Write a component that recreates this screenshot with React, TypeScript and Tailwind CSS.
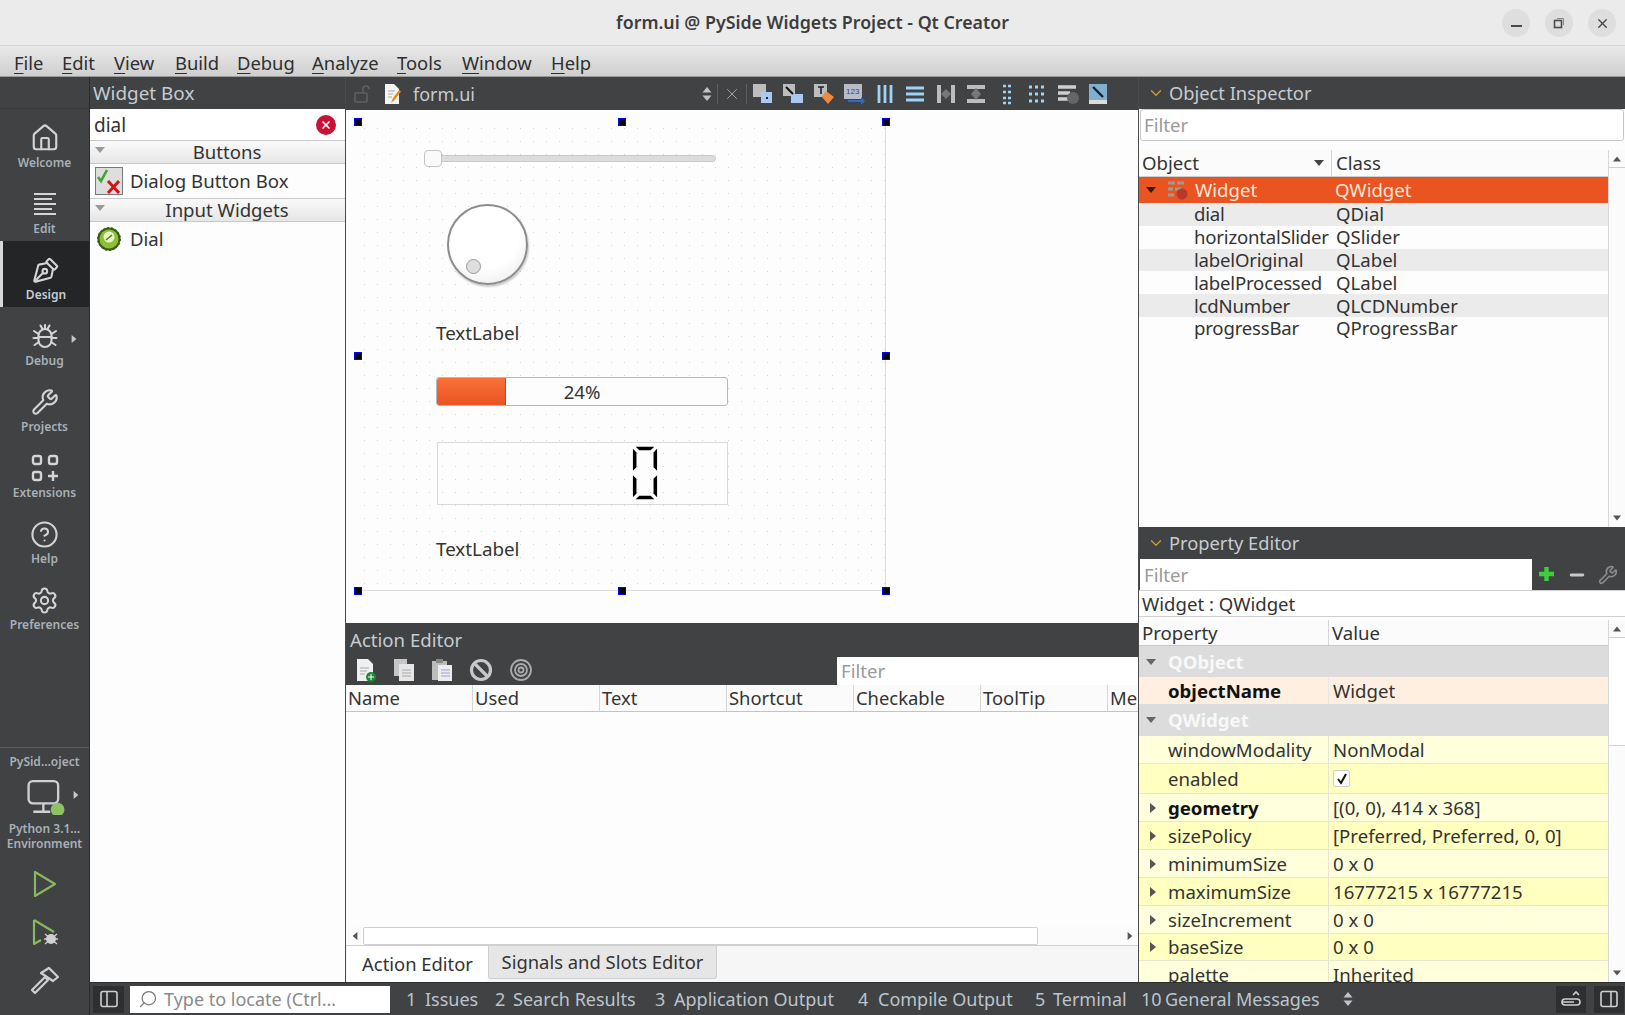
import React from "react";
import { Home, PenTool, Wrench, CircleHelp, Settings, Search, X, Minus, ChevronDown } from "lucide-react";

const Tri = ({ dir = "down", c = "#555", s = 5 }: { dir?: "down" | "right" | "up" | "left"; c?: string; s?: number }) => {
  const pts = { down: "0,2 10,2 5,8", up: "0,8 10,8 5,2", right: "2,0 8,5 2,10", left: "8,0 2,5 8,10" }[dir];
  return (
    <svg width={s * 2} height={s * 2} viewBox="0 0 10 10" className="shrink-0">
      <polygon points={pts} fill={c} />
    </svg>
  );
};

const Updown = ({ c = "#c8ccd0" }: { c?: string }) => (
  <svg width="10" height="16" viewBox="0 0 10 16" className="shrink-0">
    <polygon points="5,1 9.5,6.5 0.5,6.5" fill={c} />
    <polygon points="5,15 9.5,9.5 0.5,9.5" fill={c} />
  </svg>
);

const menus = [
  ["F", "ile", 30],
  ["E", "dit", 34],
  ["V", "iew", 43],
  ["B", "uild", 44],
  ["D", "ebug", 57],
  ["A", "nalyze", 67],
  ["T", "ools", 47],
  ["W", "indow", 71],
  ["H", "elp", 40],
] as const;

function TitleBar() {
  return (
    <div className="h-[46px] shrink-0 bg-[#ebebeb] border-b border-[#d2d2d2] flex items-center relative">
      <div className="flex-1 text-center text-[17.8px] font-semibold text-[#3d3d3d]">form.ui @ PySide Widgets Project - Qt Creator</div>
      <div className="absolute right-[9px] top-[9px] flex gap-[15px]">
        <div className="w-[28px] h-[28px] rounded-full bg-[#dedede] flex items-center justify-center">
          <div className="w-[11px] h-[2px] bg-[#4a4a4a] mt-[6px]" />
        </div>
        <div className="w-[28px] h-[28px] rounded-full bg-[#dedede] flex items-center justify-center">
          <svg width="14" height="14" viewBox="0 0 14 14" fill="none" stroke="#4a4a4a">
            <rect x="2.5" y="4.5" width="7" height="7" strokeWidth="1.6" />
            <path d="M5 2.5h6.5V9" strokeWidth="1" stroke="#888" />
          </svg>
        </div>
        <div className="w-[28px] h-[28px] rounded-full bg-[#dedede] flex items-center justify-center">
          <X size={15} strokeWidth={2.2} color="#444" />
        </div>
      </div>
    </div>
  );
}

function MenuBar() {
  return (
    <div className="h-[31px] shrink-0 bg-gradient-to-b from-[#e9e9e9] to-[#cfcfcf] border-b border-[#9a9a9a] flex items-center pl-[14px] pt-[4px] gap-[18px] text-[18.4px] text-[#2f2f2f]">
      {menus.map(([a, b, w]) => (
        <div key={a} className="leading-none whitespace-nowrap" style={{ width: w }}>
          <span className="underline underline-offset-[3px]">{a}</span>
          {b}
        </div>
      ))}
    </div>
  );
}

const EditIcon = () => (
  <svg width="26" height="26" viewBox="0 0 26 26" stroke="#d4d4d4" strokeWidth="2">
    <path d="M2 3h22M2 8h18M2 13h22M2 18h18M2 23h22" />
  </svg>
);
const ExtIcon = () => (
  <svg width="28" height="28" viewBox="0 0 28 28" fill="none" stroke="#d4d4d4" strokeWidth="2.4">
    <rect x="2" y="2" width="8" height="8" rx="2" />
    <rect x="18" y="2" width="8" height="8" rx="2" />
    <rect x="2" y="18" width="8" height="8" rx="2" />
    <path d="M22 17v10M17 22h10" />
  </svg>
);
const DebugIcon = () => (
  <svg width="28" height="28" viewBox="0 0 28 28" fill="none" stroke="#d4d4d4" strokeWidth="2.1" strokeLinecap="round">
    <rect x="7.5" y="7" width="13" height="18" rx="6.5" />
    <path d="M7.5 15h13M14 3v4M9.500 3.500l2 3.500M18.500 3.500l-2 3.500M3 9l4.500 3M25 9l-4.500 3M2.500 16h5M25.500 16h-5M3.500 23l4.500-3M24.500 23l-4.500-3" />
  </svg>
);

const navItems = [
  { l: "Welcome", i: <Home size={30} strokeWidth={1.7} color="#d4d4d4" /> },
  { l: "Edit", i: <EditIcon /> },
  { l: "Design", i: <PenTool size={28} strokeWidth={1.8} color="#d4d4d4" className="-scale-y-100" />, on: true },
  { l: "Debug", i: <DebugIcon />, more: true },
  { l: "Projects", i: <Wrench size={28} strokeWidth={1.8} color="#d4d4d4" /> },
  { l: "Extensions", i: <ExtIcon /> },
  { l: "Help", i: <CircleHelp size={29} strokeWidth={1.7} color="#d4d4d4" /> },
  { l: "Preferences", i: <Settings size={29} strokeWidth={1.7} color="#d4d4d4" /> },
];

function Sidebar() {
  return (
    <div className="w-[90px] shrink-0 bg-[#404244] flex flex-col border-r border-[#2b2c2d]">
      <div className="h-[32px] shrink-0 border-b border-[#38393b]" />
      <div className="flex flex-col">
        {navItems.map((n) => (
          <div
            key={n.l}
            className={`h-[66px] shrink-0 pt-[8px] flex flex-col items-center justify-center relative ${n.on ? "bg-[#242526] border-l-[3px] border-[#d8d8d8]" : ""}`}
          >
            <div className="h-[34px] flex items-center justify-center">{n.i}</div>
            <div className={`text-[12px] font-semibold leading-[16px] ${n.on ? "text-[#c4ccd4]" : "text-[#a8b0b8]"}`}>{n.l}</div>
            {n.more && (
              <div className="absolute right-[11px] top-[28px]">
                <Tri dir="right" c="#c8c8c8" s={4} />
              </div>
            )}
          </div>
        ))}
      </div>
      <div className="flex-1" />
      <div className="border-t border-[#5a5c5e] flex flex-col items-center h-[268px] shrink-0 pt-[5px]">
        <div className="text-[12px] font-semibold text-[#a8b0b8] leading-[18px]">PySid…oject</div>
        <div className="relative h-[40px] w-full flex justify-center items-center mt-[6px]">
          <svg width="38" height="36" viewBox="0 0 36 34" fill="none" stroke="#d0d0d0" strokeWidth="2.2" className="ml-[3px]">
            <rect x="1.500" y="2" width="28" height="21" rx="4" />
            <path d="M15.500 23v7M6 31h16" />
            <circle cx="29" cy="29" r="6.5" fill="#8cc265" stroke="none" />
          </svg>
          <div className="absolute right-[9px] top-[14px]">
            <Tri dir="right" c="#c8c8c8" s={4} />
          </div>
        </div>
        <div className="text-[12px] font-semibold text-[#a8b0b8] leading-[15px] text-center mt-[4px]">
          Python 3.1…
          <br />
          Environment
        </div>
        <svg width="26" height="28" viewBox="0 0 26 28" fill="none" stroke="#86b85e" strokeWidth="2.2" className="mt-[19px]">
          <path d="M3 2v24l20-12z" strokeLinejoin="round" />
        </svg>
        <svg width="28" height="30" viewBox="0 0 28 30" fill="none" stroke="#86b85e" strokeWidth="2.2" className="mt-[20px]">
          <path d="M3 2v24l7-4M3 2l20 12" strokeLinejoin="round" />
          <circle cx="20" cy="21" r="5" fill="#cfcfcf" stroke="none" />
          <path d="M13 21h14M14 16l12 10M26 16l-12 10" stroke="#cfcfcf" strokeWidth="1.3" />
        </svg>
        <svg width="30" height="30" viewBox="0 0 30 30" fill="none" stroke="#d0d0d0" strokeWidth="2.2" className="mt-[17px]" strokeLinejoin="round">
          <path d="M2 25l13-13 3 3L5 28z" />
          <path d="M11 8l8-5 9 9-5 4z" />
        </svg>
      </div>
    </div>
  );
}

const DockTitle = ({ t }: { t: string }) => (
  <div className="h-[32px] shrink-0 bg-[#404244] flex items-center text-[18.3px] text-[#c6ccd2] whitespace-nowrap">
    <ChevronDown size={18} strokeWidth={1.6} color="#d0a030" className="ml-[8px] mr-[4px]" />
    {t}
  </div>
);

const CatRow = ({ t }: { t: string }) => (
  <div className="h-[24px] shrink-0 bg-gradient-to-b from-[#fafafa] to-[#e6e6e6] border-y border-[#c8c8c8] flex items-center relative text-[18.6px] text-[#333]">
    <div className="absolute left-[5px] top-[4px]">
      <Tri c="#9a9a9a" s={5} />
    </div>
    <div className="flex-1 text-center pl-[19px] leading-none">{t}</div>
  </div>
);

function WidgetBox() {
  return (
    <div className="w-[256px] shrink-0 flex flex-col bg-[#fdfdfd] border-r border-[#4a4a4a]">
      <div className="pl-[3px] h-[32px] bg-[#404244] flex items-center text-[18.9px] text-[#c6ccd2]">Widget Box</div>
      <div className="h-[31px] mx-[1px] bg-white flex items-center justify-between pl-[3px] pr-[8px] pt-[1px] text-[19px] text-[#333]">
        dial
        <div className="w-[20px] h-[20px] rounded-full bg-[#cc1136] flex items-center justify-center">
          <X size={12} strokeWidth={3.2} color="#fff" />
        </div>
      </div>
      <CatRow t="Buttons" />
      <div className="h-[34px] shrink-0 flex items-center pl-[5px] text-[18.6px] text-[#333] whitespace-nowrap">
        <svg width="28" height="28" viewBox="0 0 28 28" className="mr-[7px] shrink-0">
          <rect x="0.5" y="0.5" width="27" height="27" fill="#dedede" stroke="#777" />
          <path d="M3 10l3 4 6-11" fill="none" stroke="#3da532" strokeWidth="2.6" />
          <path d="M13 14l11 12M24 14L13 26" stroke="#d21616" strokeWidth="3" />
        </svg>
        Dialog Button Box
      </div>
      <CatRow t="Input Widgets" />
      <div className="h-[33px] shrink-0 flex items-center pl-[7px] text-[18.6px] text-[#333]">
        <svg width="24" height="26" viewBox="0 0 24 26" className="mr-[9px] shrink-0">
          <circle cx="12" cy="13" r="11.5" fill="#3d5a1a" strokeDasharray="2 2" stroke="#3d5a1a" />
          <circle cx="12" cy="13" r="9.5" fill="#8bc036" />
          <circle cx="12" cy="11" r="5.5" fill="#e8f3c8" />
          <path d="M9 14l6-5" stroke="#567a1a" strokeWidth="1.6" />
        </svg>
        Dial
      </div>
      <div className="flex-1" />
    </div>
  );
}

const Handle = ({ x, y }: { x: number; y: number }) => (
  <div className="absolute w-[8px] h-[8px] bg-black border border-[#0000ff] box-border" style={{ left: x - 4, top: y - 4 }} />
);

const seg = ["5,1 31,1 26,6 10,6", "1,4 6,9 6,30 1,35", "35,4 30,9 30,30 35,35", "1,41 6,46 6,67 1,72", "35,41 30,46 30,67 35,72", "5,75 31,75 26,70 10,70"];

function FormCanvas() {
  const ox = 346;
  const oy = 110;
  return (
    <div className="relative h-[513px] shrink-0 bg-[#fdfdfd] overflow-hidden">
      <div className="absolute left-[12px] top-[12px] w-[528px] h-[469px] border-r border-b border-[#dcdcdc] bg-[radial-gradient(#d4d4d4_0.7px,transparent_0.9px)] bg-[size:13px_13px]" />
      <div className="absolute left-[82px] top-[45px] w-[288px] h-[7px] rounded-full bg-[#dcdcdc] border border-[#c8c8c8]" />
      <div className="absolute left-[78px] top-[40px] w-[18px] h-[17px] rounded-[4px] bg-[#fafafa] border border-[#c4c4c4]" />
      <div className="absolute left-[101px] top-[94px] w-[81px] h-[81px] rounded-full border-2 border-[#8d8d8d] bg-[radial-gradient(circle_at_45%_35%,#ffffff_55%,#e4e4e4_100%)] shadow-[1px_2px_2px_rgba(0,0,0,0.2)]">
        <div className="absolute left-[17px] top-[53px] w-[15px] h-[15px] rounded-full border border-[#9a9a9a] bg-[#dedede]" />
      </div>
      <div className="absolute left-[90px] top-[211px] text-[18.8px] leading-[24px] text-[#333]">TextLabel</div>
      <div className="absolute left-[90px] top-[267px] w-[292px] h-[29px] rounded-[3px] border border-[#b8b8b8] bg-[#fdfdfd] overflow-hidden flex items-center justify-center text-[18.6px] text-[#333]">
        <div className="absolute left-0 top-0 bottom-0 w-[69px] bg-gradient-to-b from-[#f97038] to-[#e95420] border-r border-[#c24a1c]" />
        <span className="relative">24%</span>
      </div>
      <div className="absolute left-[91px] top-[332px] w-[291px] h-[63px] border border-[#dadada]">
        <svg width="26" height="54" viewBox="0 0 36 76" className="absolute left-[194px] top-[3px]" aria-label="0">
          {seg.map((p) => (
            <polygon key={p} points={p} fill="#000" />
          ))}
        </svg>
      </div>
      <div className="absolute left-[90px] top-[427px] text-[18.8px] leading-[24px] text-[#333]">TextLabel</div>
      {[358, 622, 886].map((x) => (
        <React.Fragment key={x}>
          <Handle x={x - ox} y={122 - oy} />
          <Handle x={x - ox} y={591 - oy} />
        </React.Fragment>
      ))}
      <Handle x={358 - ox} y={356 - oy} />
      <Handle x={886 - ox} y={356 - oy} />
    </div>
  );
}

const TB = ({ children }: { children: React.ReactNode }) => (
  <svg width="22" height="22" viewBox="0 0 22 22" className="shrink-0">
    {children}
  </svg>
);

const blue = "#9fd3f5";
const tbIcons = [
  <TB key="a"><rect x="1" y="1" width="13" height="13" fill="#bdbdbd" /><rect x="9" y="9" width="11" height="11" fill="#a9c9f0" /><rect x="14" y="14" width="2" height="2" fill="#222" /></TB>,
  <TB key="b"><rect x="1" y="1" width="12" height="12" fill="#bdbdbd" /><rect x="9" y="11" width="12" height="9" fill="#a9c9f0" /><path d="M4 4l7 7" stroke="#111" strokeWidth="2" /></TB>,
  <TB key="c"><rect x="1" y="1" width="13" height="13" fill="#bdbdbd" /><path d="M5 4h6M8 4v7" stroke="#222" strokeWidth="1.6" /><polygon points="13,8 21,14 15,21 9,14" fill="#f08a40" /></TB>,
  <TB key="d"><rect x="1" y="1" width="18" height="15" fill="#b8bcc8" /><text x="3" y="11" fontSize="8" fill="#2a4a9a" fontFamily="Liberation Sans">123</text><path d="M5 17h13v-3l4 4-4 4v-3H5z" fill="#2a6cc8" /></TB>,
  <TB key="e"><path d="M5 2v18M11 2v18M17 2v18" stroke={blue} strokeWidth="2.8" /></TB>,
  <TB key="f"><path d="M2 5h18M2 11h18M2 17h18" stroke={blue} strokeWidth="2.8" /></TB>,
  <TB key="g"><path d="M4 2v18M18 2v18" stroke="#bdbdbd" strokeWidth="4" /><path d="M6 11l5-5 5 5-5 5z" fill="#777" /></TB>,
  <TB key="h"><path d="M2 4h18M2 18h18" stroke="#bdbdbd" strokeWidth="4" /><path d="M11 5l5 6-5 6-5-6z" fill="#777" /></TB>,
  <TB key="i"><path d="M7 3h3M12 3h3M7 9h3M12 9h3M7 15h3M12 15h3M7 20h3M12 20h3" stroke={blue} strokeWidth="2.6" /></TB>,
  <TB key="j"><path d="M3 4h3M9 4h3M15 4h3M3 11h3M9 11h3M15 11h3M3 18h3M9 18h3M15 18h3" stroke={blue} strokeWidth="3" /></TB>,
  <TB key="k"><path d="M1 4h18M1 10h12M1 16h10" stroke="#cfcfcf" strokeWidth="3.4" /><circle cx="16" cy="15" r="6" fill="#666" /></TB>,
  <TB key="l"><rect x="2" y="1" width="18" height="20" fill="#7fb0d0" /><path d="M2 17h18v4H2z" fill="#ddd" /><path d="M6 4l10 10" stroke="#123" strokeWidth="2.4" /></TB>,
];

function DocIcon() {
  return (
    <svg width="18" height="22" viewBox="0 0 18 22" className="shrink-0">
      <path d="M2 1h9l5 5v15H2z" fill="#f4f4f4" />
      <path d="M5 8h7M5 11h5M5 14h4" stroke="#aaa" />
      <path d="M8 20l2-5 6-8 2 1.500-6 8z" fill="#e88a1c" />
    </svg>
  );
}

function EditorBar() {
  return (
    <div className="h-[33px] shrink-0 bg-[#404244] flex items-center text-[18px] text-[#c6ccd2] relative">
      <svg width="16" height="18" viewBox="0 0 16 18" fill="none" stroke="#5e6062" strokeWidth="1.6" className="ml-[8px]">
        <rect x="1" y="8" width="12" height="9" rx="1" />
        <path d="M9 8V4a3 3 0 0 1 6 0" />
      </svg>
      <div className="ml-[13px]"><DocIcon /></div>
      <div className="ml-[12px] leading-none">form.ui</div>
      <div className="ml-auto flex items-center pr-[29px]">
        <Updown c="#c0c4c8" />
        <div className="w-px h-[20px] bg-[#5c5e60] ml-[5px]" />
        <X size={18} strokeWidth={1} color="#bfc3c7" className="mx-[5px]" />
        <div className="w-px h-[20px] bg-[#5c5e60] mr-[5px]" />
        <div className="flex gap-[8.500px]">{tbIcons}</div>
      </div>
    </div>
  );
}

function ActionEditor() {
  const cols = ["Name", "Used", "Text", "Shortcut", "Checkable", "ToolTip", "Me"];
  return (
    <div className="flex-1 min-h-0 flex flex-col">
      <div className="h-[62px] shrink-0 bg-[#404244] flex flex-col">
        <div className="h-[33px] pl-[4px] flex items-center text-[18.6px] text-[#c6ccd2]">Action Editor</div>
        <div className="flex-1 flex items-end pl-[9px]">
          <div className="flex gap-[16px] mb-[3px]">
            <svg width="22" height="24" viewBox="0 0 22 24"><path d="M2 1h11l5 5v17H2z" fill="#f0f0f0" /><path d="M5 10h9M5 13h7M5 16h5" stroke="#aaa" /><circle cx="16" cy="19" r="5" fill="#1e8a34" /><path d="M13 19h6M16 16v6" stroke="#fff" /></svg>
            <svg width="22" height="24" viewBox="0 0 22 24"><rect x="1" y="1" width="13" height="17" fill="#c6c6c6" /><rect x="6" y="6" width="15" height="17" fill="#e6e6e6" /><path d="M9 12h9M9 15h9M9 18h9" stroke="#aaa" /></svg>
            <svg width="22" height="24" viewBox="0 0 22 24"><rect x="1" y="3" width="15" height="19" fill="#bdbdbd" /><rect x="5" y="1" width="7" height="4" fill="#888" /><rect x="7" y="7" width="14" height="16" fill="#ececec" /><path d="M10 12h9M10 15h9M10 18h9" stroke="#9aa0e0" /></svg>
            <svg width="24" height="24" viewBox="0 0 24 24" fill="none" stroke="#c8c8c8" strokeWidth="3.2"><circle cx="12" cy="12" r="9.500" /><path d="M5 5l14 14" /></svg>
            <svg width="26" height="24" viewBox="0 0 26 24" fill="none" stroke="#aaa" strokeWidth="1.8"><circle cx="12" cy="12" r="10" /><circle cx="12" cy="12" r="6" /><circle cx="12" cy="12" r="2.500" /></svg>
          </div>
          <div className="ml-auto w-[301px] h-[28px] bg-white flex items-center pl-[4px] text-[18.6px] text-[#9a9a9a]">Filter</div>
        </div>
      </div>
      <div className="h-[27px] shrink-0 flex bg-[#fbfbfb] border-b border-[#c4c4c4] text-[18.4px] text-[#333] overflow-hidden">
        {cols.map((c) => (
          <div key={c} className="w-[127px] shrink-0 border-r border-[#d6d6d6] pl-[2px] flex items-center leading-none whitespace-nowrap">
            {c}
          </div>
        ))}
      </div>
      <div className="flex-1 bg-[#fdfdfd]" />
      <div className="h-[18px] shrink-0 flex items-center bg-[#fbfbfb]">
        <div className="w-[17px] flex justify-center"><Tri dir="left" c="#555" s={4} /></div>
        <div className="w-[675px] h-full border border-[#cfcfcf] rounded-[2px] bg-white" />
        <div className="flex-1" />
        <div className="w-[17px] flex justify-center"><Tri dir="right" c="#555" s={4} /></div>
      </div>
      <div className="h-[37px] shrink-0 flex items-start bg-[#f6f6f6] border-t border-[#d0d0d0] text-[18.4px] text-[#333] pl-[1px]">
        <div className="w-[141px] h-[36px] bg-white rounded-b-[3px] flex items-center justify-center whitespace-nowrap">Action Editor</div>
        <div className="w-[229px] h-[33px] bg-[#e6e6e6] border-x border-b border-[#cfcfcf] rounded-b-[3px] flex items-center justify-center whitespace-nowrap">Signals and Slots Editor</div>
      </div>
    </div>
  );
}

const ScrollCol = ({ thumb }: { thumb?: number }) => (
  <div className="w-[17px] shrink-0 bg-[#fbfbfb] border-l border-[#d8d8d8] flex flex-col">
    <div className="h-[18px] border-b border-[#d0d0d0] flex items-center justify-center"><Tri dir="up" c="#555" s={4} /></div>
    {thumb ? <div className="bg-white border-b border-[#d0d0d0]" style={{ height: thumb }} /> : null}
    <div className="flex-1" />
    <div className="h-[18px] flex items-center justify-center"><Tri dir="down" c="#555" s={4} /></div>
  </div>
);

const objs = [
  ["dial", "QDial", true],
  ["horizontalSlider", "QSlider", false],
  ["labelOriginal", "QLabel", true],
  ["labelProcessed", "QLabel", false],
  ["lcdNumber", "QLCDNumber", true],
  ["progressBar", "QProgressBar", false],
] as const;

function ObjectInspector() {
  return (
    <div className="h-[450px] shrink-0 flex flex-col bg-[#fdfdfd]">
      <DockTitle t="Object Inspector" />
      <div className="h-[32px] shrink-0 mx-[1px] bg-white border border-[#c8c8c8] rounded-[3px] pl-[3px] flex items-center text-[18.6px] text-[#9a9a9a]">Filter</div>
      <div className="flex-1 min-h-0 flex pt-[9px]">
        <div className="flex-1 flex flex-col text-[18.6px] text-[#333]">
          <div className="h-[27px] flex bg-[#fbfbfb] border-b border-[#cfcfcf]">
            <div className="w-[193px] pl-[3px] border-r border-[#d6d6d6] flex items-center justify-between pr-[7px]">
              Object <Tri c="#444" s={5} />
            </div>
            <div className="pl-[4px] flex items-center">Class</div>
          </div>
          <div className="h-[26px] bg-[#e95420] text-[#fde4d8] flex items-center relative">
            <div className="ml-[7px] w-[10px]"><Tri c="#3a1a0a" s={5} /></div>
            <svg width="20" height="20" viewBox="0 0 20 20" className="ml-[12px]">
              <path d="M0 3h7M9 3h7M0 9h5M7 9h6M0 15h6" stroke="#a09a96" strokeWidth="3" />
              <circle cx="14" cy="14" r="5.500" fill="#b53a2a" />
            </svg>
            <div className="w-[144px] pl-[7px]">Widget</div>
            <div className="pl-[3px]">QWidget</div>
          </div>
          {objs.map(([a, b, s]) => (
            <div key={a} className={`h-[22.800px] flex items-center ${s ? "bg-[#ebebeb]" : ""}`}>
              <div className="w-[197px] pl-[55px] whitespace-nowrap tracking-[-0.2px]">{a}</div>
              <div>{b}</div>
            </div>
          ))}
        </div>
        <ScrollCol />
      </div>
    </div>
  );
}

type P = { n: string; v?: React.ReactNode; b?: boolean; a?: boolean; h: number; bg: string };
const props: P[] = [
  { n: "windowModality", v: "NonModal", h: 28, bg: "bg-[#ffffdc]" },
  { n: "enabled", v: (
    <div className="w-[17px] h-[17px] bg-white border border-[#d0d0d0] rounded-[2px] flex items-center justify-center">
      <svg width="12" height="12" viewBox="0 0 12 12" fill="none" stroke="#111" strokeWidth="2"><path d="M2 6l3 4 5-9" /></svg>
    </div>
  ), h: 30, bg: "bg-[#ffffbf]" },
  { n: "geometry", v: "[(0, 0), 414 x 368]", b: true, a: true, h: 28, bg: "bg-[#ffffdc]" },
  { n: "sizePolicy", v: "[Preferred, Preferred, 0, 0]", a: true, h: 28, bg: "bg-[#ffffbf]" },
  { n: "minimumSize", v: "0 x 0", a: true, h: 28, bg: "bg-[#ffffdc]" },
  { n: "maximumSize", v: "16777215 x 16777215", a: true, h: 28, bg: "bg-[#ffffbf]" },
  { n: "sizeIncrement", v: "0 x 0", a: true, h: 28, bg: "bg-[#ffffdc]" },
  { n: "baseSize", v: "0 x 0", a: true, h: 27, bg: "bg-[#ffffbf]" },
  { n: "palette", v: "Inherited", h: 28, bg: "bg-[#ffffdc]" },
];

const GroupRow = ({ t, h }: { t: string; h: number }) => (
  <div className="shrink-0 bg-[#dcdcdc] flex items-center text-[18.6px] font-bold text-[#f8f8f8]" style={{ height: h }}>
    <div className="w-[29px] pl-[7px]"><Tri c="#666" s={5} /></div>
    {t}
  </div>
);

function PropertyEditor() {
  return (
    <div className="flex-1 min-h-0 flex flex-col bg-[#fdfdfd] overflow-hidden">
      <DockTitle t="Property Editor" />
      <div className="h-[31px] shrink-0 bg-[#404244] flex items-center">
        <div className="ml-[1px] w-[392px] h-full bg-white pl-[4px] pt-[1px] flex items-center text-[18.6px] text-[#9a9a9a]">Filter</div>
        <div className="flex-1 flex items-center justify-around pr-[2px]">
          <svg width="20" height="20" viewBox="0 0 20 20"><path d="M9.500 2v14M2 9h15" stroke="#3ccf3c" strokeWidth="4.400" /></svg>
          <Minus size={20} strokeWidth={3.4} color="#c8c8c8" />
          <Wrench size={20} strokeWidth={2} color="#8a8a8a" />
        </div>
      </div>
      <div className="h-[27px] shrink-0 bg-white border-y border-[#cfcfcf] pl-[3px] flex items-center text-[18.6px] text-[#333]">Widget : QWidget</div>
      <div className="flex-1 min-h-0 flex pt-[3px] text-[18.6px] text-[#333]">
        <div className="flex-1 flex flex-col overflow-hidden">
          <div className="h-[26px] shrink-0 flex bg-[#fbfbfb] border-b border-[#c8c8c8]">
            <div className="w-[190px] pl-[3px] border-r border-[#d6d6d6] flex items-center">Property</div>
            <div className="pl-[3px] flex items-center">Value</div>
          </div>
          <GroupRow t="QObject" h={31} />
          <div className="h-[27px] shrink-0 bg-[#feefe0] flex items-center">
            <div className="w-[190px] pl-[29px] font-bold text-[#111] border-r border-[#e6e6e6] h-full flex items-center">objectName</div>
            <div className="pl-[4px]">Widget</div>
          </div>
          <GroupRow t="QWidget" h={32} />
          {props.map((p) => (
            <div key={p.n} className={`shrink-0 flex items-center border-b border-[#e8e8d0] ${p.bg}`} style={{ height: p.h }}>
              <div className={`w-[190px] h-full flex items-center border-r border-[#e6e6d0] ${p.b ? "font-bold text-[#111]" : ""}`}>
                <div className="w-[29px] pl-[9px]">{p.a && <Tri dir="right" c="#555" s={5} />}</div>
                {p.n}
              </div>
              <div className="pl-[4px] whitespace-nowrap">{p.v}</div>
            </div>
          ))}
        </div>
        <ScrollCol thumb={108} />
      </div>
    </div>
  );
}

const statusItems = [
  ["1", "Issues", 19, 89],
  ["2", "Search Results", 18, 160],
  ["3", "Application Output", 19, 203],
  ["4", "Compile Output", 20, 177],
  ["5", "Terminal", 18, 106],
  ["10", "General Messages", 24, 202],
] as const;

function StatusBar() {
  return (
    <div className="h-[33px] shrink-0 bg-[#404244] border-t border-[#2e2f30] flex items-center text-[18px] text-[#bcc4cc]">
      <div className="ml-[3px] w-[31px] h-[27px] bg-[#2e2f30] flex items-center justify-center">
        <svg width="18" height="18" viewBox="0 0 18 18" fill="none" stroke="#cfcfcf" strokeWidth="1.6"><rect x="1" y="1.500" width="16" height="15" rx="2" /><path d="M7 1.500v15" /></svg>
      </div>
      <div className="ml-[6px] w-[260px] h-[27px] bg-white flex items-center pl-[8px] text-[#8a8a8a] whitespace-nowrap">
        <Search size={20} strokeWidth={1.5} color="#777" className="-scale-x-100 mr-[6px]" />
        Type to locate (Ctrl…
      </div>
      <div className="ml-[16px] flex whitespace-nowrap">
        {statusItems.map(([n, t, o, w]) => (
          <div key={t} className="flex shrink-0 leading-[28px]" style={{ width: w }}>
            <span style={{ width: o }}>{n}</span>
            <span>{t}</span>
          </div>
        ))}
      </div>
      <Updown c="#c0c4c8" />
      <div className="ml-auto flex items-center mr-[1px] gap-[8px]">
        <div className="w-[30px] h-[27px] bg-[#2e2f30] flex items-center justify-center">
          <svg width="20" height="18" viewBox="0 0 20 18" fill="none" stroke="#cfcfcf" strokeWidth="1.600"><rect x="1" y="9" width="18" height="6" rx="3" /><path d="M1 12h12M12 5l3-3 3 3" /></svg>
        </div>
        <div className="w-[30px] h-[27px] bg-[#2e2f30] flex items-center justify-center">
          <svg width="18" height="18" viewBox="0 0 18 18" fill="none" stroke="#cfcfcf" strokeWidth="1.6"><rect x="1" y="1.500" width="16" height="15" rx="2" /><path d="M11 1.500v15" /></svg>
        </div>
      </div>
    </div>
  );
}

export default function App() {
  return (
    <div className="w-[1625px] h-[1015px] overflow-hidden flex flex-col bg-white font-['Noto_Sans','Liberation_Sans',sans-serif]">
      <TitleBar />
      <MenuBar />
      <div className="flex-1 min-h-0 flex">
        <Sidebar />
        <div className="flex-1 min-w-0 flex flex-col">
          <div className="flex-1 min-h-0 flex">
            <WidgetBox />
            <div className="w-[793px] shrink-0 flex flex-col border-r border-[#4a4a4a]">
              <EditorBar />
              <FormCanvas />
              <ActionEditor />
            </div>
            <div className="flex-1 min-w-0 flex flex-col">
              <ObjectInspector />
              <PropertyEditor />
            </div>
          </div>
          <StatusBar />
        </div>
      </div>
    </div>
  );
}
